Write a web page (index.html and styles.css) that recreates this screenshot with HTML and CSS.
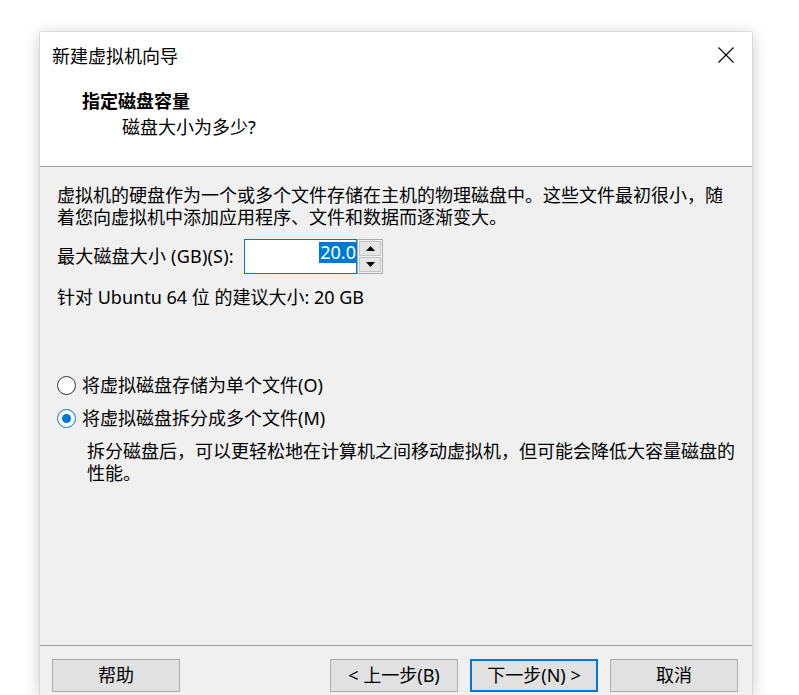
FILE: index.html
```html
<!DOCTYPE html>
<html lang="zh-CN">
<head>
<meta charset="utf-8">
<title>新建虚拟机向导</title>
<link rel="stylesheet" href="styles.css">
</head>
<body>
<div class="window">
  <div class="titlebar">
    <span class="title">新建虚拟机向导</span>
    <svg class="close" width="16" height="16" viewBox="0 0 16 16"><path d="M0.5 0.5 L15.5 15.5 M15.5 0.5 L0.5 15.5" stroke="#000" stroke-width="1.1" fill="none"/></svg>
  </div>
  <div class="header">
    <div class="h-title">指定磁盘容量</div>
    <div class="h-sub">磁盘大小为多少?</div>
  </div>
  <div class="content">
    <p class="intro">虚拟机的硬盘作为一个或多个文件存储在主机的物理磁盘中。这些文件最初很小，随<br>着您向虚拟机中添加应用程序、文件和数据而逐渐变大。</p>
    <div class="size-row">
      <label class="size-label">最大磁盘大小 (GB)(S):</label>
      <div class="spin-input"><span class="sel">20.0</span></div>
      <div class="spinner">
        <div class="spin-btn"><svg width="9" height="5" viewBox="0 0 9 5"><path d="M4.5 0 L9 5 L0 5 Z" fill="#000"/></svg></div>
        <div class="spin-btn"><svg width="9" height="5" viewBox="0 0 9 5"><path d="M0 0 L9 0 L4.5 5 Z" fill="#000"/></svg></div>
      </div>
    </div>
    <p class="rec">针对 Ubuntu 64 位 的建议大小: 20 GB</p>
    <div class="options">
      <div class="radio-row"><span class="radio"></span><span>将虚拟磁盘存储为单个文件(O)</span></div>
      <div class="radio-row second"><span class="radio checked"></span><span>将虚拟磁盘拆分成多个文件(M)</span></div>
      <p class="desc">拆分磁盘后，可以更轻松地在计算机之间移动虚拟机，但可能会降低大容量磁盘的<br>性能。</p>
    </div>
  </div>
  <div class="footer">
    <button class="btn">帮助</button>
    <div class="nav">
      <button class="btn">&lt; 上一步(B)</button>
      <button class="btn primary">下一步(N) &gt;</button>
      <button class="btn">取消</button>
    </div>
  </div>
</div>
</body>
</html>
```
FILE: styles.css
```css
html, body {
  margin: 0;
  padding: 0;
  background: #ffffff;
  overflow: hidden;
  height: 100%;
}
body {
  font-family: "Noto Sans", "Noto Sans CJK SC", sans-serif;
  font-size: 18px;
  color: #000;
}
.window {
  margin: 32px 0 0 40px;
  width: 712px;
  height: 663px;
  background: #f0f0f0;
  display: flex;
  flex-direction: column;
  box-shadow: 0 0 1px rgba(0,0,0,0.45), 0 3px 16px rgba(0,0,0,0.22);
}
.titlebar {
  height: 46px;
  box-sizing: border-box;
  padding: 11px 18px 0 12px;
  background: #fff;
  display: flex;
  justify-content: space-between;
  align-items: flex-start;
}
.title {
  font-family: "Noto Sans CJK SC", sans-serif;
  line-height: 24px;
}
.close {
  display: block;
  margin-top: 4px;
}
.header {
  height: 89px;
  box-sizing: border-box;
  background: #fff;
  border-bottom: 1px solid #a0a0a0;
  padding: 10px 0 0 42px;
}
.h-title {
  font-family: "Noto Sans CJK SC", sans-serif;
  font-weight: 700;
  line-height: 24px;
}
.h-sub {
  margin: 3px 0 0 40px;
  line-height: 24px;
}
.content {
  flex: 1;
  padding: 17px 0 0 17px;
}
.intro {
  margin: 0;
  line-height: 22px;
  white-space: nowrap;
}
.size-row {
  margin-top: 11px;
  height: 35px;
  display: flex;
  align-items: stretch;
}
.size-label {
  width: 187px;
  line-height: 35px;
  letter-spacing: 0.2px;
}
.spin-input {
  width: 113px;
  box-sizing: border-box;
  border: 1px solid #0078d7;
  background: #fff;
  display: flex;
  justify-content: flex-end;
  align-items: flex-start;
  padding: 2px 0 0 0;
}
.sel {
  background: #0078d7;
  color: #fff;
  line-height: 21px;
  padding: 0 0 0 1px;
}
.spinner {
  width: 26px;
  box-sizing: border-box;
  border: 1px solid #adadad;
  background: #f0f0f0;
  display: flex;
  flex-direction: column;
  gap: 1px;
  padding: 1px;
}
.spin-btn {
  flex: 1;
  background: #e5e5e5;
  border: 1px solid #c4c4c4;
  display: flex;
  align-items: center;
  justify-content: center;
}
.spin-btn svg {
  display: block;
}
.rec {
  margin: 12px 0 0 0;
  line-height: 22px;
}
.options {
  margin-top: 65px;
}
.radio-row {
  display: flex;
  align-items: center;
  height: 24px;
  line-height: 24px;
}
.radio-row.second {
  margin-top: 9px;
}
.radio {
  width: 19px;
  height: 19px;
  box-sizing: border-box;
  border: 1px solid #333;
  border-radius: 50%;
  background: #fff;
  margin-right: 6px;
  display: flex;
  align-items: center;
  justify-content: center;
}
.radio.checked {
  border-color: #0078d7;
}
.radio.checked::after {
  content: "";
  width: 9px;
  height: 9px;
  border-radius: 50%;
  background: #0078d7;
}
.desc {
  margin: 10px 0 0 30px;
  line-height: 22px;
  white-space: nowrap;
}
.footer {
  border-top: 1px solid #a0a0a0;
  padding: 13px 14px 0 12px;
  height: 50px;
  box-sizing: border-box;
  display: flex;
  justify-content: space-between;
  align-items: flex-start;
}
.nav {
  display: flex;
  gap: 12px;
}
.btn {
  width: 128px;
  height: 33px;
  box-sizing: border-box;
  background: #e1e1e1;
  border: 1px solid #adadad;
  font-family: "Noto Sans", "Noto Sans CJK SC", sans-serif;
  font-size: 18px;
  color: #000;
  padding: 0;
  line-height: 31px;
}
.btn.primary {
  border: 2px solid #0078d7;
  line-height: 29px;
}
```
